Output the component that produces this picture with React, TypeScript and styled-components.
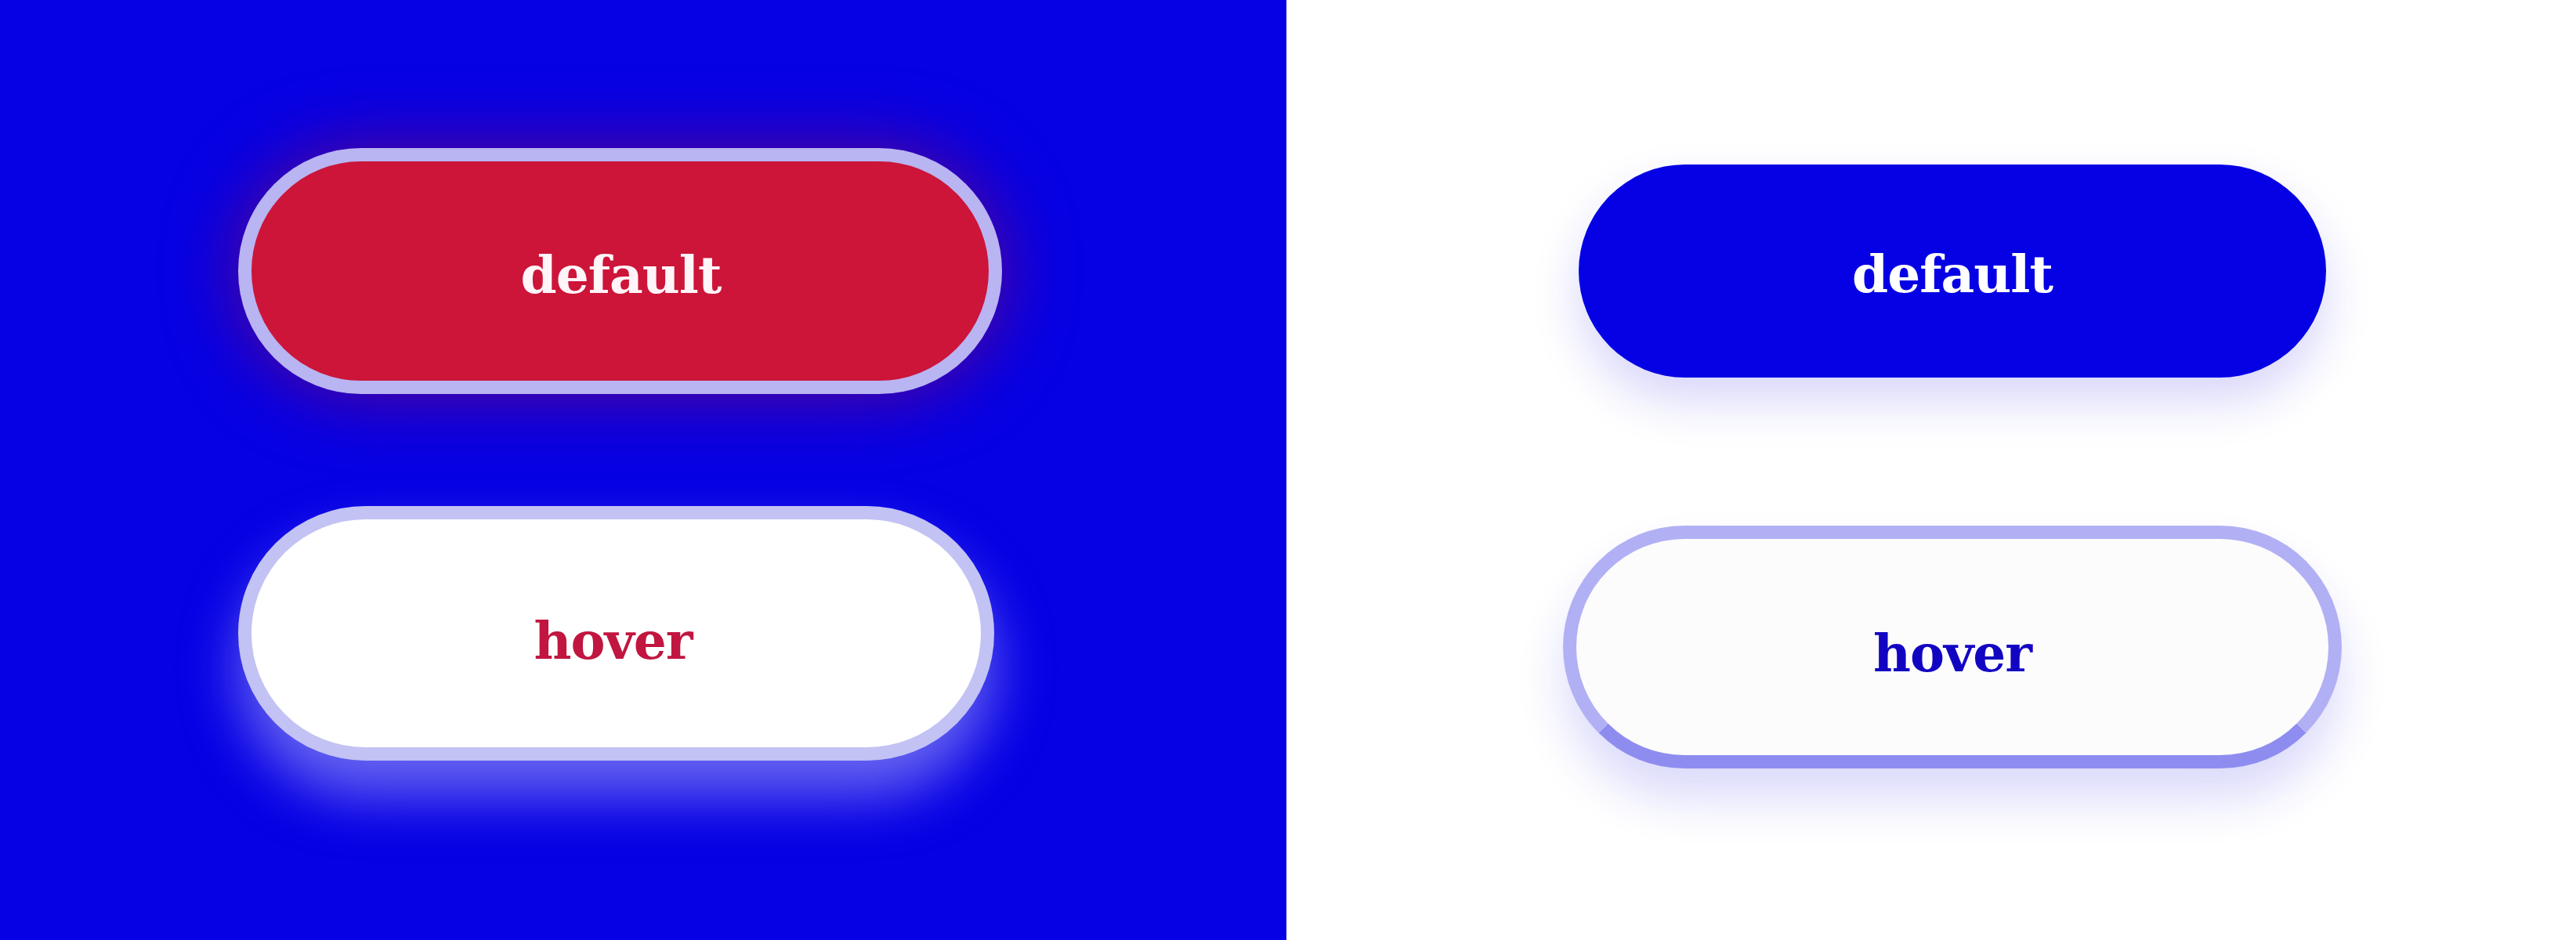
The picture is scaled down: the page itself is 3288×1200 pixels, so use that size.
import React from 'react'
import styled, { createGlobalStyle } from 'styled-components'

const Global = createGlobalStyle`
    html, body {
        margin: 0;
        padding: 0;
        height: 1200px;
        overflow: hidden;
        background: #ffffff;
    }
`
const Page = styled.div`
    display: flex;
    width: 3288px;
    height: 1200px;
`
const Panel = styled.section<{ $bg: string; $w: string; $pad: number }>`
    width: ${p => p.$w};
    flex: ${p => (p.$w === 'auto' ? 1 : 'none')};
    height: 100%;
    background: ${p => p.$bg};
    padding-left: ${p => p.$pad}px;
    box-sizing: border-box;
`
const Stack = styled.div<{ $top: number; $gap: number; $w: number }>`
    display: flex;
    flex-direction: column;
    align-items: center;
    width: ${p => p.$w}px;
    padding-top: ${p => p.$top}px;
    gap: ${p => p.$gap}px;
`
const Pill = styled.button<{
    $w: number
    $h: number
    $bg: string
    $fg: string
    $border?: string
    $borderBottom?: string
    $shadow: string
    $shift?: number
}>`
    box-sizing: border-box;
    width: ${p => p.$w}px;
    height: ${p => p.$h}px;
    margin-left: ${p => p.$shift ?? 0}px;
    border-radius: 999px;
    border: ${p => (p.$border ? `17px solid ${p.$border}` : 'none')};
    ${p => p.$borderBottom && `border-bottom-color: ${p.$borderBottom};`}
    background: ${p => p.$bg};
    color: ${p => p.$fg};
    box-shadow: ${p => p.$shadow};
    font-family: "DejaVu Serif", "Liberation Serif", serif;
    font-weight: 700;
    font-size: 66px;
    letter-spacing: -1px;
    display: flex;
    align-items: center;
    justify-content: center;
    padding: 0;
    cursor: pointer;
`
const Label = styled.span<{ $dx?: number; $dy?: number }>`
    display: block;
    transform: translate(${p => p.$dx ?? 0}px, ${p => p.$dy ?? 0}px);
`

export default function App() {
  return (
    <>
      <Global />
      <Page>
        <Panel $bg="#0600e4" $w="1642px" $pad={304}>
          <Stack $top={189} $gap={143} $w={975}>
            <Pill
              $w={975}
              $h={314}
              $bg="#cc1539"
              $fg="#fff4f8"
              $border="#b9b4f2"
              $shadow="0 0 90px 0 rgba(150, 10, 80, 0.6)"
            >
              <Label $dx={1} $dy={5}>default</Label>
            </Pill>
            <Pill
              $w={965}
              $h={325}
              $shift={-10}
              $bg="#ffffff"
              $fg="#c1163f"
              $border="#c2c2f4"
              $shadow="0 45px 70px 0 rgba(200, 200, 255, 0.5)"
            >
              <Label $dx={-4} $dy={9}>hover</Label>
            </Pill>
          </Stack>
        </Panel>
        <Panel $bg="#ffffff" $w="auto" $pad={353}>
          <Stack $top={210} $gap={189} $w={994}>
            <Pill
              $w={954}
              $h={272}
              $bg="#0600e4"
              $fg="#ffffff"
              $shadow="0 30px 60px rgba(40, 30, 230, 0.18)"
            >
              <Label $dy={4}>default</Label>
            </Pill>
            <Pill
              $w={994}
              $h={310}
              $bg="#fdfcfd"
              $fg="#1205c2"
              $border="#b2b0f4"
              $borderBottom="#8f8cf0"
              $shadow="0 40px 60px rgba(40, 30, 230, 0.16)"
            >
              <Label $dy={8}>hover</Label>
            </Pill>
          </Stack>
        </Panel>
      </Page>
    </>
  )
}
